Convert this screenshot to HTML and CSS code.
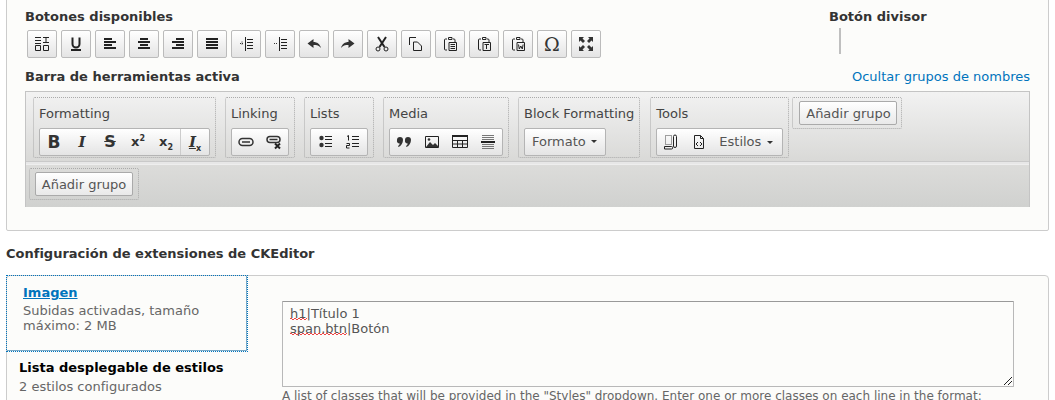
FILE: index.html
```html
<!DOCTYPE html>
<html lang="es">
<head>
    <meta charset="UTF-8">
    <meta name="viewport" content="width=device-width, initial-scale=1.0">
    <title>Configuración de CKEditor</title>
    <link rel="stylesheet" href="styles.css">
</head>
<body>
    <section class="admin-panel">
        <div class="available-row">
            <div class="available">
                <h4 class="label">Botones disponibles</h4>
                <ul class="button-list">
                    <li class="cke-btn"><svg viewBox="0 0 16 16"><path d="M1 1.500h6M1 4.500h6M1 7.500h6M1.500 9.500h5v5h-5zM9 1.500h6M12 1.500v5M9 6.500h6M9.500 9.500h5v5h-5z" class="line"/></svg></li>
                    <li class="cke-btn"><svg viewBox="0 0 16 16"><path d="M4.500 1.500v6.500a3.500 3.500 0 0 0 7 0V1.500" class="thick"/><path d="M3 14h10" class="thick"/></svg></li>
                    <li class="cke-btn"><svg viewBox="0 0 16 16"><path d="M2 3h8M2 6h12M2 9h8M2 12h12" class="thick"/></svg></li>
                    <li class="cke-btn"><svg viewBox="0 0 16 16"><path d="M4 3h8M2 6h12M4 9h8M2 12h12" class="thick"/></svg></li>
                    <li class="cke-btn"><svg viewBox="0 0 16 16"><path d="M6 3h8M2 6h12M6 9h8M2 12h12" class="thick"/></svg></li>
                    <li class="cke-btn"><svg viewBox="0 0 16 16"><path d="M2 3h12M2 6h12M2 9h12M2 12h12" class="thick"/></svg></li>
                    <li class="cke-btn"><svg viewBox="0 0 16 16"><path d="M7.500 1v14M9 3.500h6M9 6.500h6M9 9.500h6M9 12.500h6" class="line"/><path d="M2 7.500h4M4 5.500v4" class="dots"/></svg></li>
                    <li class="cke-btn"><svg viewBox="0 0 16 16"><path d="M7.500 1v14M9 3.500h6M9 6.500h6M9 9.500h6M9 12.500h6" class="line"/><path d="M2 7.500h4" class="dots"/></svg></li>
                    <li class="cke-btn"><svg viewBox="0 0 16 16"><path d="M1.500 7.500l6-4.500v3c3.500 0 6.500 2 7.500 6-2-2.500-4-3-7.500-3v3z" class="solid"/></svg></li>
                    <li class="cke-btn"><svg viewBox="0 0 16 16"><path d="M14.500 7.500l-6-4.500v3c-3.500 0-6.500 2-7.500 6 2-2.500 4-3 7.500-3v3z" class="solid"/></svg></li>
                    <li class="cke-btn"><svg viewBox="0 0 16 16"><path d="M4 1l6.500 10M12 1L5.500 11" class="thick"/><circle cx="4" cy="13" r="2" class="line"/><circle cx="12" cy="13" r="2" class="line"/></svg></li>
                    <li class="cke-btn"><svg viewBox="0 0 16 16"><path d="M1.500 9V1.500H8M5.500 6h4l4 4v4.500h-8z" class="line"/></svg></li>
                    <li class="cke-btn"><svg viewBox="0 0 16 16"><path d="M5 3H3.500a1 1 0 0 0-1 1v9a1 1 0 0 0 1 1H5M11 3h1a1 1 0 0 1 1 1v2M6.500 1.500h3.500v2H6.500zM7 6.500h7.500v8H7zM8.500 8.500h4.500M8.500 10.500h4.500M8.500 12.500h4.500" class="line"/></svg></li>
                    <li class="cke-btn"><svg viewBox="0 0 16 16"><path d="M5 3H3.500a1 1 0 0 0-1 1v9a1 1 0 0 0 1 1H5M11 3h1a1 1 0 0 1 1 1v2M6.500 1.500h3.500v2H6.500zM7 6.500h7.500v8H7zM8.500 8.500h4.500M10.500 8.500v4.500" class="line"/></svg></li>
                    <li class="cke-btn"><svg viewBox="0 0 16 16"><path d="M5 3H3.500a1 1 0 0 0-1 1v9a1 1 0 0 0 1 1H5M11 3h1a1 1 0 0 1 1 1v2M6.500 1.500h3.500v2H6.500zM7 6.500h7.500v8H7zM8.500 8.500l.8 4.500 1.500-3 1.500 3 .8-4.500" class="line"/></svg></li>
                    <li class="cke-btn omega">Ω</li>
                    <li class="cke-btn"><svg viewBox="0 0 16 16"><path d="M1 1h5L4.500 2.500 7 5 5 7 2.500 4.500 1 6zM15 1v5l-1.500-1.500L11 7 9 5l2.500-2.500L10 1zM1 15v-5l1.500 1.500L5 9l2 2-2.500 2.500L6 15zM15 15h-5l1.500-1.500L9 11l2-2 2.500 2.500L15 10z" class="solid"/></svg></li>
                </ul>
            </div>
            <div class="divider-box">
                <h4 class="label">Botón divisor</h4>
                <div class="divider"></div>
            </div>
        </div>

        <div class="active-head">
            <h4 class="label">Barra de herramientas activa</h4>
            <a class="link" href="#">Ocultar grupos de nombres</a>
        </div>

        <div class="toolbar">
            <div class="toolbar-row">
                <div class="group">
                    <div class="group-name">Formatting</div>
                    <div class="btn-set">
                        <span class="ico letter bold">B</span>
                        <span class="ico letter ital">I</span>
                        <span class="ico letter strike">S</span>
                        <span class="ico letter script">x<sup>2</sup></span>
                        <span class="ico letter script">x<sub>2</sub></span>
                        <span class="ico letter clear"><u>I</u><sub>x</sub></span>
                    </div>
                </div>
                <div class="group">
                    <div class="group-name">Linking</div>
                    <div class="btn-set">
                        <span class="ico"><svg viewBox="0 0 16 16"><path d="M4.500 4.500h7a3.500 3.500 0 0 1 0 7h-7a3.500 3.500 0 0 1 0-7zM4 8h8" class="thick-thin"/></svg></span>
                        <span class="ico"><svg viewBox="0 0 16 16"><path d="M4 2.500h7a3 3 0 0 1 0 6H4a3 3 0 0 1 0-6zM3.500 5.500h8" class="thick-thin"/><path d="M9 9.500l5 5M14 9.500l-5 5" class="thick"/></svg></span>
                    </div>
                </div>
                <div class="group">
                    <div class="group-name">Lists</div>
                    <div class="btn-set">
                        <span class="ico"><svg viewBox="0 0 16 16"><circle cx="4.500" cy="4" r="2.200" class="solid"/><circle cx="4.500" cy="11" r="2.200" class="solid"/><path d="M8 2.500h7M8 5.500h7M8 9.500h7M8 12.500h7" class="line"/></svg></span>
                        <span class="ico"><svg viewBox="0 0 16 16"><path d="M2 2.500l1.500-1v5M1.500 9.500h3v2h-3v2.500h3M7 2.500h7M7 5.500h7M7 9.500h7M7 12.500h7" class="line"/></svg></span>
                    </div>
                </div>
                <div class="group">
                    <div class="group-name">Media</div>
                    <div class="btn-set">
                        <span class="ico"><svg viewBox="0 0 16 16"><path d="M1 6a3 3 0 0 1 6 0c0 3-2 6-4.500 7l-.5-1c1-.6 1.500-1.500 1.700-2.500A3 3 0 0 1 1 6z" class="solid"/><path d="M9 6a3 3 0 0 1 6 0c0 3-2 6-4.500 7l-.5-1c1-.6 1.500-1.500 1.700-2.500A3 3 0 0 1 9 6z" class="solid"/></svg></span>
                        <span class="ico"><svg viewBox="0 0 16 16"><path d="M1.500 2.500h13v11h-13z" class="line"/><path d="M2 13l4-5 3 3 2-2 4 4z" class="solid"/><circle cx="5" cy="5.500" r="1.300" class="solid"/></svg></span>
                        <span class="ico"><svg viewBox="0 0 16 16"><path d="M0 2h16" class="thick"/><path d="M.5 2.500h15v11H.5zM5.500 6v7.500M10.500 6v7.500M.5 6.500h15M.5 10h15" class="line"/></svg></span>
                        <span class="ico"><svg viewBox="0 0 16 16"><path d="M2 1.500h12M2 3.500h12M2 5.500h12M2 10.500h12M2 12.500h12M2 14.500h12" class="faint"/><path d="M1 8h14" class="thick"/></svg></span>
                    </div>
                </div>
                <div class="group">
                    <div class="group-name">Block Formatting</div>
                    <div class="btn-set combo">Formato <i class="caret"></i></div>
                </div>
                <div class="group group-tools">
                    <div class="group-name">Tools</div>
                    <div class="btn-set">
                        <span class="ico"><svg viewBox="0 0 16 16"><path d="M2.500 1.500h6v9h-6z" class="dash"/><path d="M10.500 2.500a1.500 1.500 0 0 1 3 0v9.500a1.500 1.500 0 0 1-3 0zM1.500 12.500h7a1 1 0 0 1 0 2.500h-7z" class="line"/></svg></span>
                        <span class="ico"><svg viewBox="0 0 16 16"><path d="M3.500 1.500h6l3 3v10h-9zM9.500 1.500v3h3" class="line"/><path d="M7 8l-2 2 2 2M9 8l2 2-2 2" class="line"/></svg></span>
                        <span class="combo-inline">Estilos <i class="caret"></i></span>
                    </div>
                </div>
                <div class="group group-add group-add-first">
                    <button class="add-group" type="button">Añadir grupo</button>
                </div>
            </div>
            <div class="toolbar-row toolbar-row-2">
                <div class="group group-add">
                    <button class="add-group" type="button">Añadir grupo</button>
                </div>
            </div>
        </div>
    </section>

    <h3 class="section-title">Configuración de extensiones de CKEditor</h3>

    <section class="tabs-panel">
        <div class="tabs">
            <div class="tab tab-active">
                <a class="tab-title" href="#">Imagen</a>
                <div class="tab-summary">Subidas activadas, tamaño máximo: 2 MB</div>
            </div>
            <div class="tab">
                <div class="tab-title-plain">Lista desplegable de estilos</div>
                <div class="tab-summary">2 estilos configurados</div>
            </div>
        </div>
        <div class="tab-pane">
            <div class="fake-textarea">
                <div><span class="typo">h1</span>|Título 1</div>
                <div><span class="typo">span.btn</span>|Botón</div>
                <svg class="resizer" viewBox="0 0 10 10"><path d="M1 9l8-8M5 9l4-4" class="line"/></svg>
            </div>
            <p class="help">A list of classes that will be provided in the "Styles" dropdown. Enter one or more classes on each line in the format:</p>
        </div>
    </section>
</body>
</html>
```

FILE: styles.css
```css
html, body { margin: 0; height: 400px; overflow: hidden; background: #fff; }
body { font-family: "DejaVu Sans", sans-serif; font-size: 13px; color: #333; line-height: 15px; }
h3, h4, p, ul { margin: 0; padding: 0; }

/* svg stroke classes */
svg { display: block; width: 16px; height: 16px; fill: none; }
.line { stroke: #222; stroke-width: 1; fill: none; }
.thick { stroke: #222; stroke-width: 2; fill: none; }
.thick-thin { stroke: #333; stroke-width: 1.500; fill: none; }
.solid { fill: #333; }
.dots { stroke: #333; stroke-width: 1; stroke-dasharray: 1 1; fill: none; }
.dash { stroke: #444; stroke-width: 1; stroke-dasharray: 1 1; fill: none; }
.faint { stroke: #777; stroke-width: 1; fill: none; }

.admin-panel { margin: -12px 6px 0; height: 243px; box-sizing: border-box; padding: 20px 18px 0; background: #fcfcfa; border: 1px solid #ccc; border-radius: 2px; }
.label { font-size: 13px; font-weight: bold; color: #333; }

.available-row { display: flex; justify-content: space-between; }
.available .label { margin-bottom: 6px; }
.button-list { list-style: none; display: flex; gap: 4px; margin-left: 2px; }
.cke-btn { width: 30px; height: 28px; box-sizing: border-box; display: flex; align-items: center; justify-content: center; border: 1px solid #bbb; border-radius: 2px; background: linear-gradient(#fff, #e4e4e4); }
.omega { font-family: "DejaVu Serif", serif; font-size: 19px; color: #333; }

.divider-box { width: 201px; }
.divider { width: 2px; height: 26px; margin: 4px 0 0 10px; background: #bfbfbf; }

.active-head { display: flex; justify-content: space-between; align-items: baseline; margin-top: 11px; }
.link { color: #0074bd; text-decoration: none; }

.toolbar { margin-top: 7px; width: 1005px; height: 116px; box-sizing: border-box; border: 1px solid #c4c4c4; background: #e7e7e7; }
.toolbar-row { display: flex; gap: 9px; height: 70px; box-sizing: border-box; padding: 5px 0 0 7px; background: linear-gradient(#f2f2f2, #d9d9d7); border-bottom: 1px solid #c9c9c9; }
.toolbar-row-2 { height: 43px; margin-top: 2px; padding: 3px 0 0 3px; background: linear-gradient(#dcdcda, #d0d1cf); border-top: 1px solid #eee; border-bottom: 0; }

.group { border: 1px dotted #aaa; border-radius: 2px; padding: 0 5px; height: 61px; box-sizing: border-box; }
.group-tools { margin-left: 1px; }
.group-name { height: 30px; line-height: 32px; color: #444; white-space: nowrap; }
.group-add { display: flex; justify-content: center; align-items: center; width: 110px; height: 32px; padding: 0; margin-left: -5px; }
.group-add-first { margin-left: -6px; padding-left: 2px; }
.toolbar-row-2 .group-add { margin: 0; }

.btn-set { display: flex; align-items: center; height: 28px; box-sizing: border-box; border: 1px solid #b4b4b4; border-radius: 2px; background: linear-gradient(#fff, #e4e4e4); }
.ico { width: 28px; height: 26px; display: flex; align-items: center; justify-content: center; color: #333; }
.letter { display: block; text-align: center; line-height: 26px; font-weight: bold; font-size: 15px; }
.bold { font-size: 17px; }
.ital { font-family: "DejaVu Serif", serif; font-style: italic; }
.strike { text-decoration: line-through; font-size: 16px; }
.script { font-size: 13px; }
.clear { font-family: "DejaVu Serif", serif; font-style: italic; border-left: 1px solid #ccc; }
.letter sup, .letter sub { font-family: "DejaVu Sans", sans-serif; font-size: 8px; line-height: 0; font-style: normal; }

.combo { width: 82px; padding: 0 0 2px 7px; color: #555; }
.combo-inline { margin-bottom: 2px; padding: 0 9px 0 6px; color: #555; white-space: nowrap; }
.caret { display: inline-block; margin-left: 2px; vertical-align: 2px; border: 3px solid transparent; border-top-color: #333; border-bottom: 0; }
.combo .caret { margin-left: 5px; }

.add-group { display: block; font: 13px/15px "DejaVu Sans", sans-serif; color: #555; width: 98px; height: 24px; padding: 0; border: 1px solid #aaa; border-radius: 2px; background: linear-gradient(#fff, #e9e9e9); white-space: nowrap; }

.section-title { font-size: 13px; font-weight: bold; color: #333; margin: 15px 0 0 6px; }

.tabs-panel { display: flex; margin: 14px 6px 0; height: 200px; border: 1px solid #ccc; border-radius: 4px; background: #fcfcfa; }
.tabs { width: 240px; flex-shrink: 0; }
.tab { padding: 9px 12px 10px; height: 56px; }
.tab-active { height: 75px; box-sizing: border-box; padding: 9px 16px; outline: 1px dotted #0074bd; border-right: 1px solid #7aa9c6; border-bottom: 1px solid #7aa9c6; }
.tab-title { font-weight: bold; color: #0074bd; }
.tab-title-plain { font-weight: bold; color: #000; }
.tab-summary { color: #666; margin-top: 4px; }
.tab-active .tab-summary { margin-top: 3px; }

.tab-pane { flex: 1; padding: 25px 34px 0 35px; min-width: 0; }
.fake-textarea { position: relative; height: 86px; box-sizing: border-box; padding: 4px 7px; color: #555; border: 1px solid #b8b8b8; border-top-color: #999; border-radius: 1px; }
/* spellcheck squiggle: two offset rows of red pixels */
.typo {
    background:
        linear-gradient(90deg, #e44 50%, transparent 50%) 0 calc(100% - 2px) / 4px 1px repeat-x,
        linear-gradient(90deg, transparent 50%, #e44 50%) 0 calc(100% - 1px) / 4px 1px repeat-x;
}
.resizer { position: absolute; right: 0; bottom: 0; width: 10px; height: 10px; }
.help { margin-top: 2px; color: #666; white-space: nowrap; font-size: 12px; }
```
